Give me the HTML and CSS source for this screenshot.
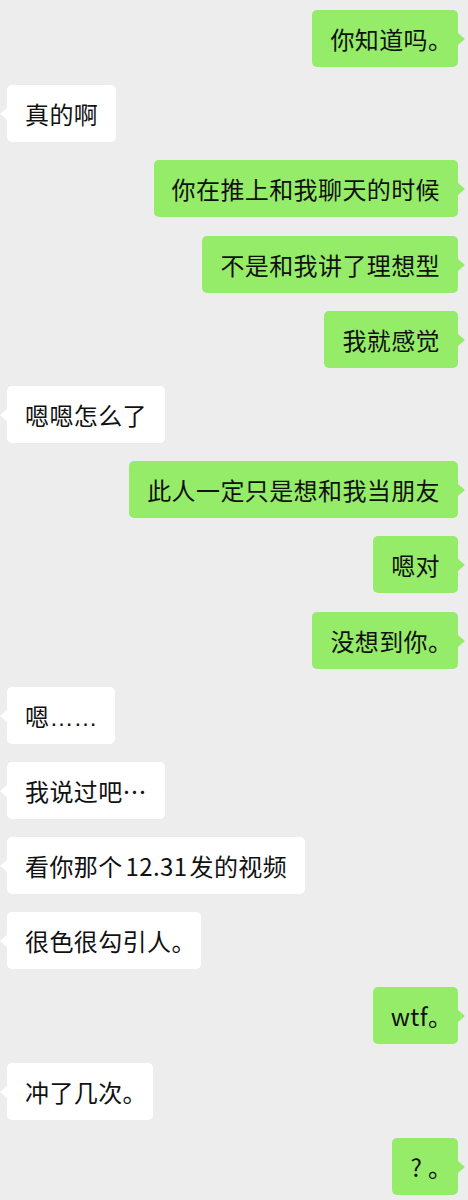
FILE: index.html
```html
<!DOCTYPE html>
<html lang="zh-CN">
<head>
<meta charset="utf-8">
<title>Chat</title>
<link rel="stylesheet" href="styles.css">
</head>
<body>
<div class="chat">
  <div class="row me"><div class="bubble">你知道吗<span class="p">。</span></div></div>
  <div class="row them"><div class="bubble">真的啊</div></div>
  <div class="row me"><div class="bubble">你在推上和我聊天的时候</div></div>
  <div class="row me"><div class="bubble">不是和我讲了理想型</div></div>
  <div class="row me"><div class="bubble">我就感觉</div></div>
  <div class="row them"><div class="bubble">嗯嗯怎么了</div></div>
  <div class="row me"><div class="bubble">此人一定只是想和我当朋友</div></div>
  <div class="row me"><div class="bubble">嗯对</div></div>
  <div class="row me"><div class="bubble">没想到你<span class="p">。</span></div></div>
  <div class="row them"><div class="bubble">嗯<span class="dots">……</span></div></div>
  <div class="row them"><div class="bubble">我说过吧…</div></div>
  <div class="row them"><div class="bubble">看你那个<span class="num">12.31</span>发的视频</div></div>
  <div class="row them"><div class="bubble">很色很勾引人<span class="p">。</span></div></div>
  <div class="row me"><div class="bubble">wtf<span class="p">。</span></div></div>
  <div class="row them"><div class="bubble">冲了几次<span class="p">。</span></div></div>
  <div class="row me"><div class="bubble">? <span class="p">。</span></div></div>
</div>
</body>
</html>
```
FILE: styles.css
```css
html, body {
  margin: 0;
  padding: 0;
  background: #ededed;
}
body {
  font-family: "Noto Sans CJK SC", "Noto Sans", sans-serif;
  color: #111111;
}
.chat {
  display: flex;
  flex-direction: column;
  gap: 18.2px;
  padding: 10px 0 10px 0;
}
.row {
  display: flex;
}
.row.me {
  justify-content: flex-end;
  padding-right: 10px;
}
.row.them {
  justify-content: flex-start;
  padding-left: 7px;
}
.bubble {
  position: relative;
  font-size: 24px;
  letter-spacing: 0.4px;
  line-height: 29px;
  height: 29px;
  padding: 14px 18px 14px 18px;
  border-radius: 5px;
  white-space: nowrap;
}
.me .bubble {
  background: #95ec69;
}
.them .bubble {
  background: #ffffff;
}
.bubble::after {
  content: "";
  position: absolute;
  top: 23px;
  width: 0;
  height: 0;
  border-top: 6px solid transparent;
  border-bottom: 6px solid transparent;
}
.me .bubble::after {
  right: -7px;
  border-left: 7px solid #95ec69;
}
.them .bubble::after {
  left: -7px;
  border-right: 7px solid #ffffff;
}
.p {
  font-feature-settings: "halt";
  letter-spacing: 0;
}
.num {
  margin: 0 2px 0 3px;
}
.dots {
  font-family: "Liberation Sans", sans-serif;
  letter-spacing: 0;
}
```
